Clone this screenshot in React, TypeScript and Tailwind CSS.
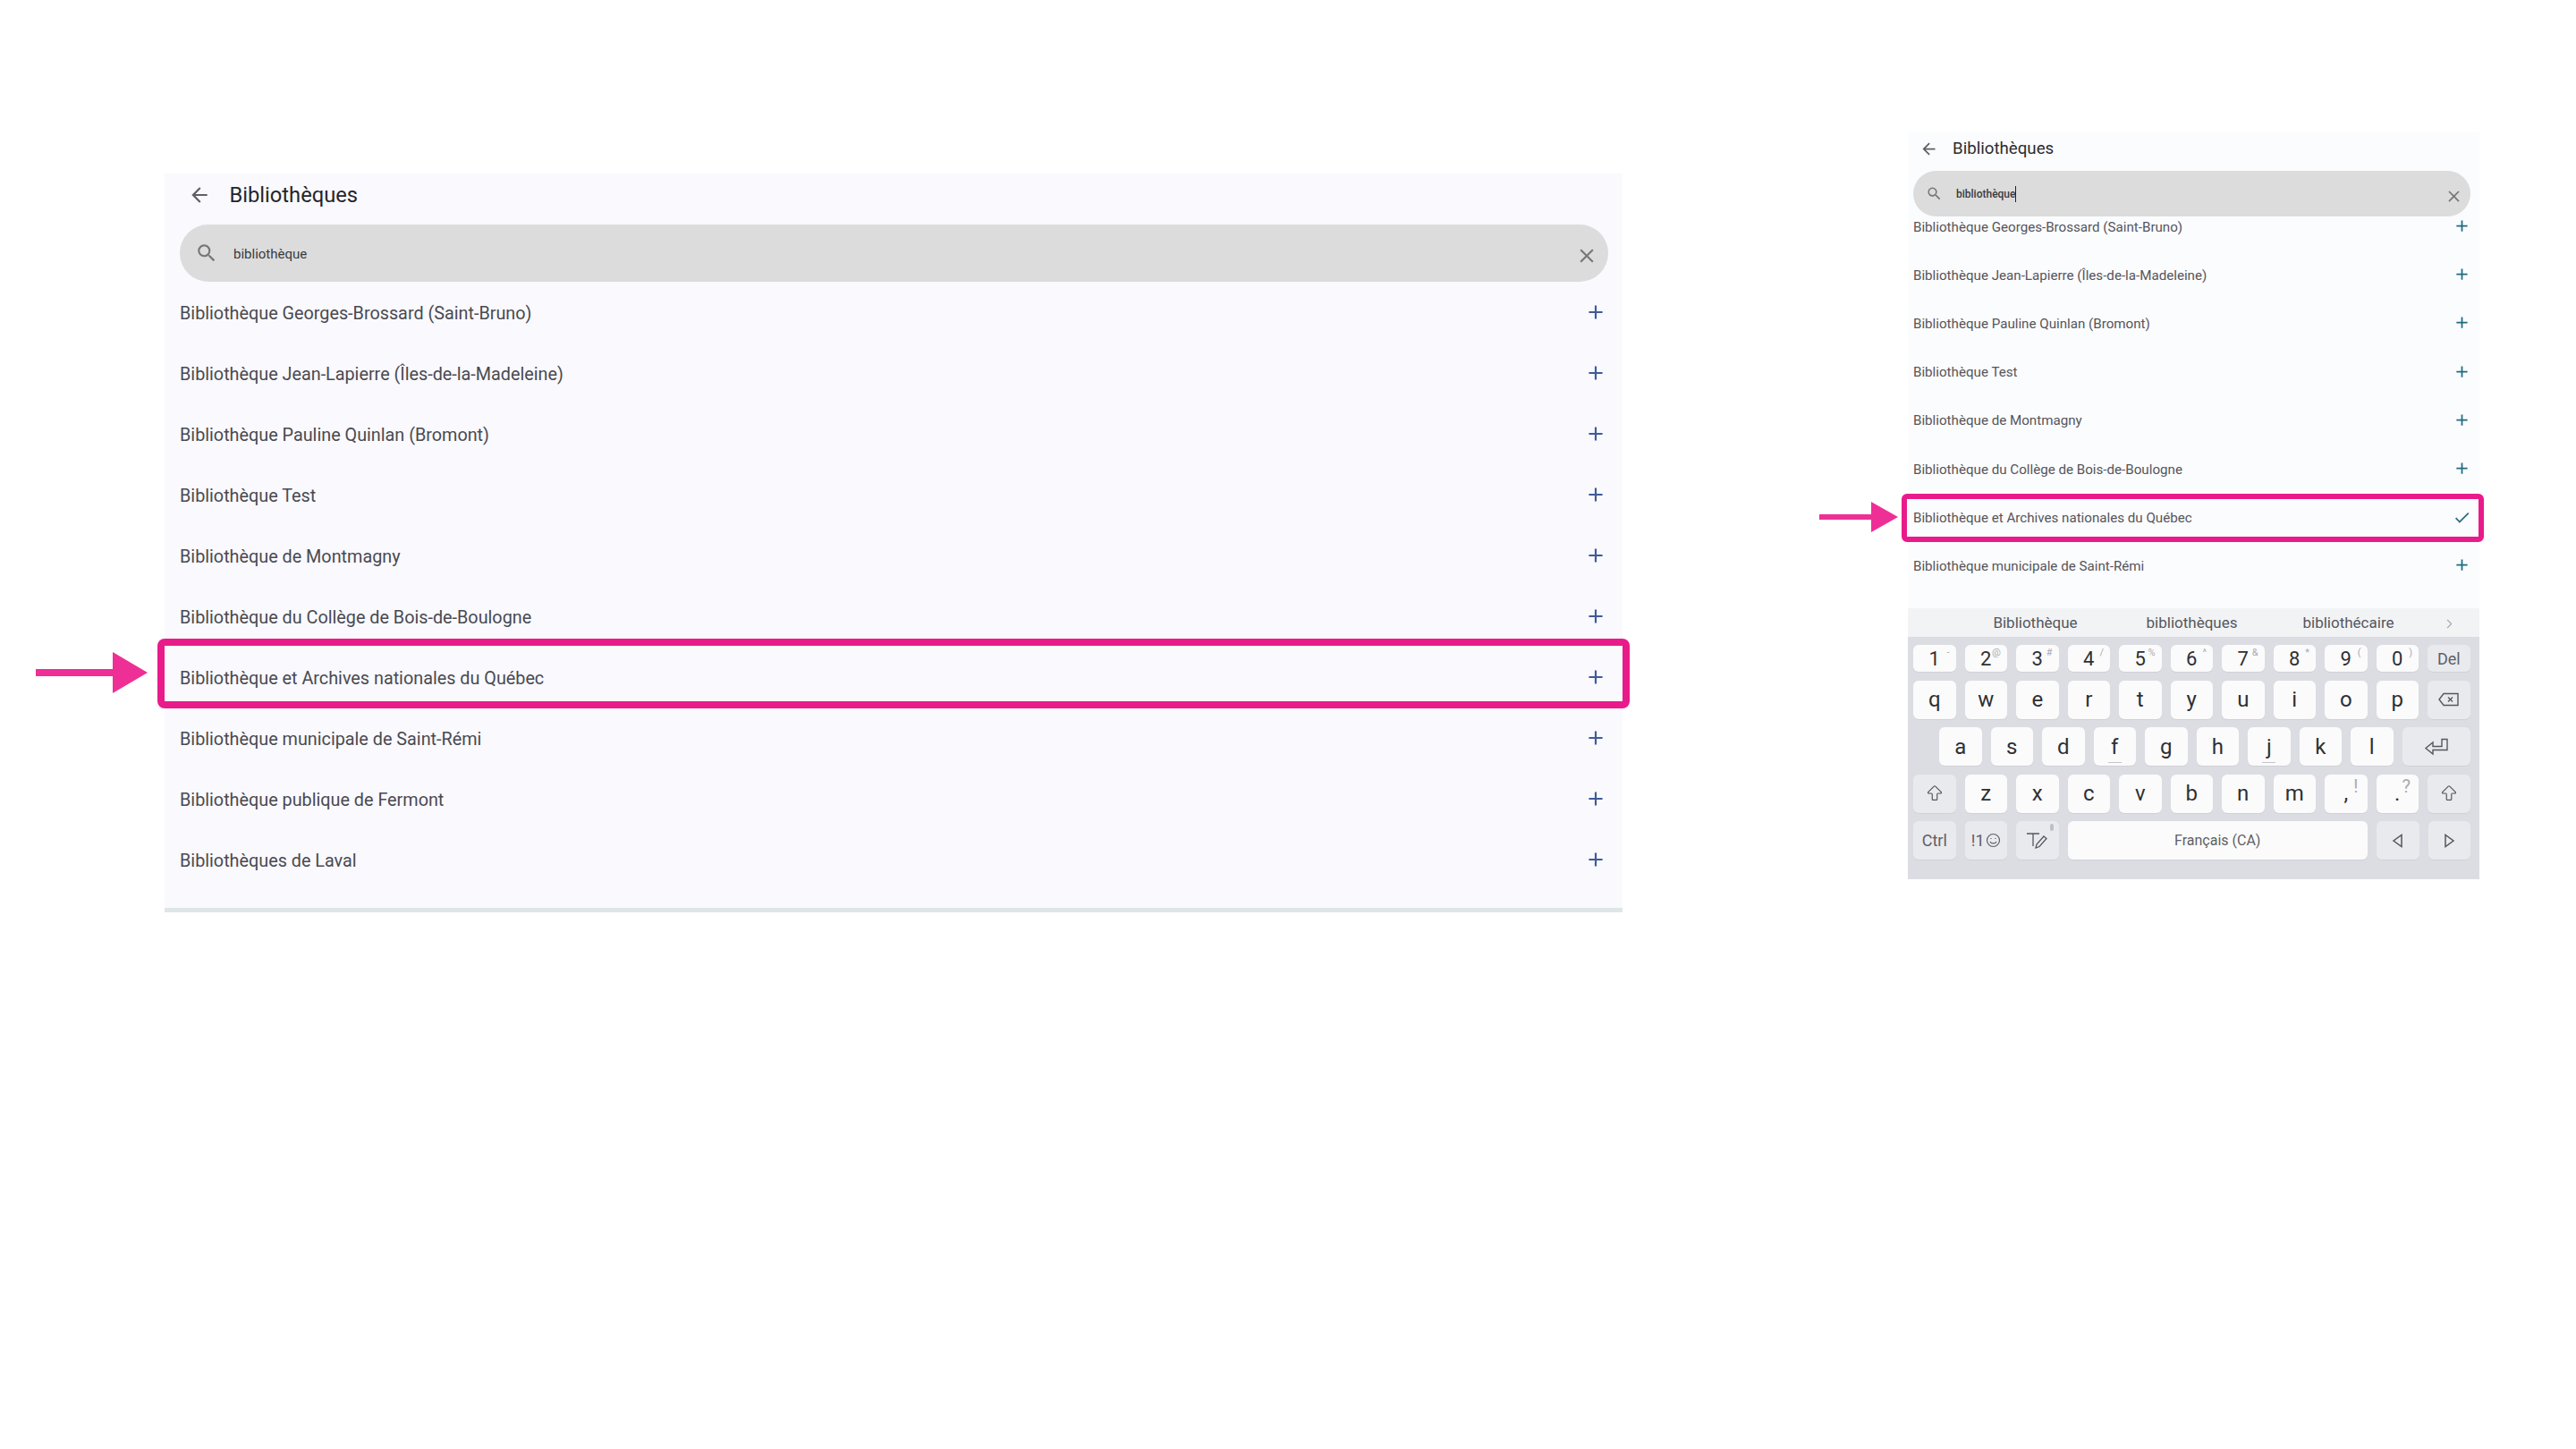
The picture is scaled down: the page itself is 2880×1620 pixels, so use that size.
import React from "react";
import { ArrowBigUp, ChevronRight } from "lucide-react";
import { MdArrowBack, MdSearch, MdClose, MdAdd, MdCheck } from "react-icons/md";

const names = [
  "Bibliothèque Georges-Brossard (Saint-Bruno)",
  "Bibliothèque Jean-Lapierre (Îles-de-la-Madeleine)",
  "Bibliothèque Pauline Quinlan (Bromont)",
  "Bibliothèque Test",
  "Bibliothèque de Montmagny",
  "Bibliothèque du Collège de Bois-de-Boulogne",
  "Bibliothèque et Archives nationales du Québec",
  "Bibliothèque municipale de Saint-Rémi",
  "Bibliothèque publique de Fermont",
  "Bibliothèques de Laval",
];

function Key({ label, sup, fn, cls, children }: { label?: string; sup?: string; fn?: boolean; cls?: string; children?: React.ReactNode }) {
  return (
    <div className={`relative flex items-center justify-center rounded-[6px] shadow-[0_1px_0_#d0d1d6] ${fn ? "bg-[#e9eaee]" : "bg-[#fbfbfc]"} ${cls ?? "w-[47.5px]"}`}>
      {label}
      {sup && <span className="absolute right-[7px] top-[2px] text-[11px] leading-[14px] text-[#a9abb0]">{sup}</span>}
      {children}
    </div>
  );
}

const row1: [string, string][] = [["1", "-"], ["2", "@"], ["3", "#"], ["4", "/"], ["5", "%"], ["6", "^"], ["7", "&"], ["8", "*"], ["9", "("], ["0", ")"]];

function Keyboard() {
  return (
    <div className="flex h-[303px] flex-col bg-[#dcdde2] font-['Roboto',sans-serif]">
      <div className="relative flex h-[32px] shrink-0 items-center bg-[#f2f3f5] pl-[55px] pt-[2px] text-[17px] text-[#55575d]">
        <span className="w-[175px] text-center">Bibliothèque</span>
        <span className="w-[175px] text-center">bibliothèques</span>
        <span className="w-[175px] text-center">bibliothécaire</span>
        <ChevronRight className="absolute left-[597px] size-[17px] text-[#a8aab0]" strokeWidth={1.6} />
      </div>
      <div className="flex flex-col gap-[9.5px] pl-[6px] pr-[10px] pt-[9px] text-[24px] text-[#2f3033]">
        <div className="flex h-[30px] gap-[10px] text-[22px]">
          {row1.map(([l, s]) => <Key key={l} label={l} sup={s} />)}
          <Key fn label="Del" cls="w-[47.5px] text-[18px] text-[#5e6065]" />
        </div>
        <div className="flex h-[43px] gap-[10px]">
          {"qwertyuiop".split("").map((l) => <Key key={l} label={l} />)}
          <Key fn>
            <svg width="24" height="16" viewBox="0 0 24 16" fill="none" stroke="#55575c" strokeWidth="1.4"><path d="M6 1.500h16v13H6L1 8z" /><path d="M11 5.500l5 5M16 5.500l-5 5" /></svg>
          </Key>
        </div>
        <div className="flex h-[43px] gap-[10px] pl-[29px]">
          {"asdfghjkl".split("").map((l) => (
            <Key key={l} label={l}>
              {(l === "f" || l === "j") && <span className="absolute bottom-[3px] h-[1px] w-[15px] bg-[#c4c5c9]" />}
            </Key>
          ))}
          <Key fn cls="flex-1">
            <svg width="28" height="20" viewBox="0 0 28 20" fill="none" stroke="#55575c" strokeWidth="1.4"><path d="M26 1.500h-6v8H10V5L2 11.500 10 18v-4.500h16z" /></svg>
          </Key>
        </div>
        <div className="flex h-[43px] gap-[10px]">
          <Key fn><ArrowBigUp className="size-[22px] text-[#55575c]" strokeWidth={1.3} /></Key>
          {"zxcvbnm".split("").map((l) => <Key key={l} label={l} />)}
          <Key label="," sup="!" cls="w-[47.5px] [&>span]:text-[20px] [&>span]:top-[6px] [&>span]:right-[10px]" />
          <Key label="." sup="?" cls="w-[47.5px] [&>span]:text-[20px] [&>span]:top-[6px] [&>span]:right-[9px]" />
          <Key fn><ArrowBigUp className="size-[22px] text-[#55575c]" strokeWidth={1.3} /></Key>
        </div>
        <div className="flex h-[43px] gap-[10px] text-[18px] text-[#5e6065]">
          <Key fn label="Ctrl" />
          <Key fn label="!1">
            <svg className="ml-[1px]" width="17" height="17" viewBox="0 0 17 17" fill="none" stroke="#5e6065" strokeWidth="1.2"><circle cx="8.500" cy="8.500" r="7" /><path d="M5 10c1 2.500 6 2.500 7 0" /><path d="M6 6v1M11 6v1" /></svg>
          </Key>
          <Key fn>
            <svg width="26" height="20" viewBox="0 0 26 20" fill="none" stroke="#55575c" strokeWidth="1.3"><path d="M1 2h14M8 2v14" /><path d="M11 18l1-4 8-9 3 2.500-8 9z" /></svg>
            <span className="absolute right-[6px] top-[3px] h-[8px] w-[4px] rounded-full bg-[#bfc0c5]" />
          </Key>
          <Key cls="flex-1 text-[16px]" label="Français (CA)" />
          <Key fn>
            <svg width="14" height="16" viewBox="0 0 14 16" fill="none" stroke="#55575c" strokeWidth="1.5"><path d="M11 1.500v13L2 8z" /></svg>
          </Key>
          <Key fn>
            <svg width="14" height="16" viewBox="0 0 14 16" fill="none" stroke="#55575c" strokeWidth="1.5"><path d="M3 1.500v13L12 8z" /></svg>
          </Key>
        </div>
      </div>
    </div>
  );
}

function PageArrow({ w, h, bar, head, cls }: { w: number; h: number; bar: number; head: number; cls: string }) {
  const c = h / 2;
  return (
    <svg className={cls} width={w} height={h} viewBox={`0 0 ${w} ${h}`}>
      <path fill="#ee2f96" d={`M0 ${c - bar / 2}H${w - head}V0L${w} ${c}L${w - head} ${h}V${c + bar / 2}H0z`} />
    </svg>
  );
}

export default function App() {
  return (
    <div className="relative flex h-[1620px] w-[2880px] items-start overflow-hidden bg-white pl-[184px] pt-[148px] font-['Roboto',sans-serif]">
      <PageArrow cls="absolute left-[40px] top-[729px]" w={125} h={46} bar={8} head={39} />
      <PageArrow cls="absolute left-[2034px] top-[561px]" w={88} h={34} bar={6} head={30} />

      {/* Wide layout */}
      <section className="mt-[46px] flex h-[826px] w-[1630px] shrink-0 flex-col border-b-[5px] border-[#dfe6e8] bg-[#f9f9fe]">
        <header className="flex h-[57px] shrink-0 items-center pb-[8px] pl-[26px]">
          <MdArrowBack className="mb-[1px] size-[26px] text-[#5f5f64]" />
          <h1 className="ml-[20.5px] text-[23.7px] text-[#26262a]">Bibliothèques</h1>
        </header>
        <div className="relative mx-[17px] flex h-[64px] w-[1597px] shrink-0 items-center rounded-full bg-[#dcdcdc] pl-[17px]">
          <MdSearch className="size-[26px] text-[#77777a]" />
          <span className="ml-[17px] pt-[2px] text-[15px] text-[#3a3a3e]">bibliothèque</span>
          <MdClose className="absolute right-[11px] top-[22px] size-[26px] text-[#77777a]" />
        </div>
        <ul className="mt-[1px]">
          {names.map((n, i) => (
            <li key={n} className="relative flex h-[68px] items-center justify-between pl-[17px] pr-[17px] text-[19.8px] text-[#4a4a50]">
              <span className="pt-[1px]">{n}</span>
              <MdAdd className="mb-[2px] size-[26px] text-[#3f5a9a]" />
              {i === 6 && <span className="absolute -left-[8px] -right-[8px] -top-[10px] bottom-0 rounded-[8px] border-[8px] border-[#e91b8b]" />}
            </li>
          ))}
        </ul>
      </section>

      {/* Phone layout */}
      <section className="ml-[319px] flex h-[835px] w-[639px] shrink-0 flex-col bg-[#fbfcfe]">
        <header className="flex h-[43px] shrink-0 items-center pb-[7px] pl-[12.5px]">
          <MdArrowBack className="size-[21px] text-[#5f5f64]" />
          <h2 className="ml-[16.5px] text-[18.7px] text-[#2c2c30]">Bibliothèques</h2>
        </header>
        <div className="relative mx-[6px] flex h-[51px] w-[623px] shrink-0 items-center rounded-full bg-[#dcdcdc] pl-[13.5px]">
          <MdSearch className="size-[19px] text-[#77777a]" />
          <span className="relative ml-[15.5px] border-r border-[#222] text-[12px] font-medium text-[#3a3a3e]">bibliothèque</span>
          <MdClose className="absolute right-[8.5px] top-[18px] size-[21px] text-[#77777a]" />
        </div>
        <ul className="-mt-[15px] h-[453px]">
          {names.slice(0, 8).map((n, i) => (
            <li key={n} className="relative flex h-[54.2px] items-center justify-between pl-[6px] pr-[9.5px] text-[15.15px] text-[#55555b]">
              {n}
              {i === 6 ? <MdCheck className="mb-[1px] size-[21px] text-[#2b6d80]" /> : <MdAdd className="mb-[3px] size-[21px] text-[#1f6b80]" />}
              {i === 6 && <span className="absolute -left-[7px] -right-[5px] inset-y-0 rounded-[6px] border-[6px] border-[#e91b8b]" />}
            </li>
          ))}
        </ul>
        <Keyboard />
      </section>
    </div>
  );
}
